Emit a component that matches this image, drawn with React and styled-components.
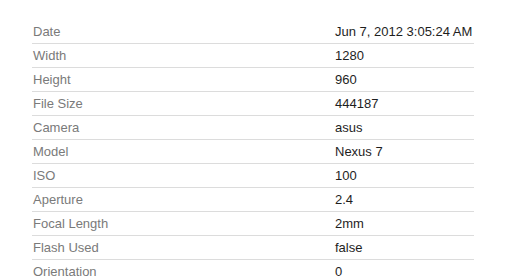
import React from "react";
import styled, { createGlobalStyle } from "styled-components";

const Global = createGlobalStyle`
  html, body { margin: 0; padding: 0; background: #fff; }
  body { font-family: Arial, "Liberation Sans", sans-serif; }
`;

const Page = styled.div`
  padding: 20px 0 0 32px;
`;

const Table = styled.div`
  width: 442px;
  display: grid;
  grid-template-columns: 302px 1fr;
`;

const Cell = styled.div`
  height: 23px;
  border-bottom: 1px solid #dcdcdc;
  display: flex;
  align-items: center;
  padding-left: 1px;
  font-size: 13px;
  line-height: 15px;
  color: ${(p) => (p.$label ? "#7a7a7a" : "#1e1e1e")};
  white-space: nowrap;
`;

const rows = [
  ["Date", "Jun 7, 2012 3:05:24 AM"],
  ["Width", "1280"],
  ["Height", "960"],
  ["File Size", "444187"],
  ["Camera", "asus"],
  ["Model", "Nexus 7"],
  ["ISO", "100"],
  ["Aperture", "2.4"],
  ["Focal Length", "2mm"],
  ["Flash Used", "false"],
  ["Orientation", "0"],
];

export default function App() {
  return (
    <Page>
      <Global />
      <Table>
        {rows.map(([k, v]) => (
          <React.Fragment key={k}>
            <Cell $label>{k}</Cell>
            <Cell>{v}</Cell>
          </React.Fragment>
        ))}
      </Table>
    </Page>
  );
}
